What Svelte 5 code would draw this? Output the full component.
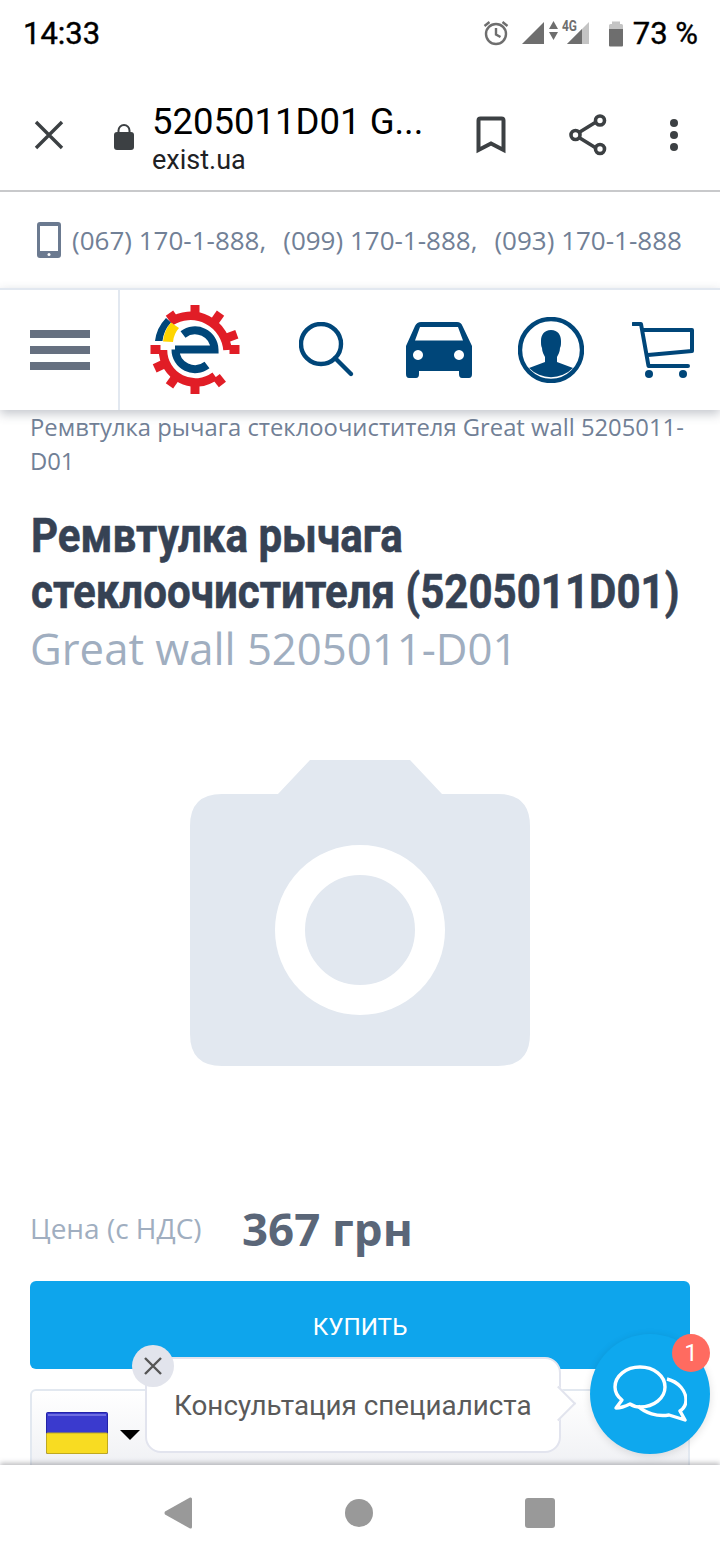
<script>
  const phones = ['(067) 170-1-888,', '(099) 170-1-888,', '(093) 170-1-888'];
</script>

<div class="screen">
  <header class="status">
    <span class="time">14:33</span>
    <div class="status-right">
      <svg class="alarm" width="28" height="28" viewBox="0 0 28 28" fill="none" stroke="#6e6e6e" stroke-width="2.4">
        <circle cx="14" cy="15" r="10" />
        <path d="M14 9v6.500l4.500 2.500M2.500 7l5-4M25.500 7l-5-4" />
      </svg>
      <svg class="signal" width="70" height="34" viewBox="0 -4 70 34">
        <path d="M0 24 22 2v22z" fill="#6e6e6e" />
        <path d="M27 9l4.500-8 4.500 8zM27 12h9l-4.500 8z" fill="#6e6e6e" />
        <path d="M45 24 67 2v22z" fill="#c4c4c4" />
        <path d="M45 24 60 9v15z" fill="#6e6e6e" />
        <text x="40" y="11" class="fourg" textLength="15" lengthAdjust="spacingAndGlyphs">4G</text>
      </svg>
      <svg class="battery" width="16" height="27" viewBox="0 0 16 27">
        <path d="M1 5.500q0-1.500 1.500-1.500H4V1.500h8V4h1.500Q15 4 15 5.500V9H1z" fill="#c4c4c4" />
        <path d="M1 9h14v16.500q0 1-1 1H2q-1 0-1-1z" fill="#6e6e6e" />
      </svg>
      <span class="pct">73 %</span>
    </div>
  </header>

  <div class="toolbar">
    <svg class="close" width="30" height="30" viewBox="0 0 30 30" stroke="#3c4043" stroke-width="3.400" fill="none">
      <path d="M2 2l26 26M28 2 2 28" />
    </svg>
    <svg class="lock" width="22" height="28" viewBox="0 0 22 28">
      <path d="M5.500 10V7.500a5.500 5.500 0 0 1 11 0V10" fill="none" stroke="#3c4043" stroke-width="2" />
      <rect x="1" y="9" width="20" height="18" rx="3" fill="#3c4043" />
    </svg>
    <div class="url">
      <div class="page-title">5205011D01 G...</div>
      <div class="domain">exist.ua</div>
    </div>
    <svg class="bookmark" width="30" height="38" viewBox="0 0 30 38" fill="none" stroke="#3c4043" stroke-width="4">
      <path d="M2.500 34V4.500q0-2 2-2h21q2 0 2 2V34L15 27.500z" />
    </svg>
    <svg class="share" width="38" height="42" viewBox="0 0 38 42" fill="none" stroke="#3c4043" stroke-width="3.600">
      <path d="M10 18.500 27 8M10 23.500 27 34" />
      <circle cx="6.500" cy="21" r="4.500" />
      <circle cx="31" cy="6.500" r="4.500" />
      <circle cx="31" cy="35" r="4.500" />
    </svg>
    <svg class="more" width="8" height="32" viewBox="0 0 8 32" fill="#3c4043">
      <circle cx="4" cy="4" r="4" />
      <circle cx="4" cy="16" r="4" />
      <circle cx="4" cy="28" r="4" />
    </svg>
  </div>

  <main class="page">
    <div class="phones">
      <svg width="24" height="36" viewBox="0 0 24 36">
        <path fill-rule="evenodd" fill="#6b7a90" d="M3 0h18q3 0 3 3v30q0 3-3 3H3q-3 0-3-3V3q0-3 3-3zM3 4v25h18V4z" />
        <circle cx="12" cy="32.500" r="1.500" fill="#fff" />
      </svg>
      {#each phones as p}
        <span>{p}</span>
      {/each}
    </div>

    <nav class="mainnav">
      <div class="burger">
        <i></i><i></i><i></i>
      </div>
      <div class="navicons">
        <svg class="logo" width="90" height="90" viewBox="150 304 90 90" fill="none">
          <g stroke="#e11d26" stroke-width="8.500">
            <path d="M171 320.500A37 37 0 0 1 227.500 349" />
            <path d="M163 349a32.500 32.500 0 0 0 52 26" />
          </g>
          <g fill="#e11d26">
            <rect x="190.500" y="304" width="9" height="10" />
            <rect x="190.500" y="304" width="9" height="10" transform="rotate(35 195 348.500)" />
            <rect x="190.500" y="304" width="9" height="10" transform="rotate(70 195 348.500)" />
            <rect x="190.500" y="304" width="9" height="10" transform="rotate(90 195 348.500)" />
            <rect x="190.500" y="304" width="9" height="10" transform="rotate(142 195 348.500)" />
            <rect x="190.500" y="304" width="9" height="10" transform="rotate(180 195 348.500)" />
            <rect x="190.500" y="304" width="9" height="10" transform="rotate(215 195 348.500)" />
            <rect x="190.500" y="304" width="9" height="10" transform="rotate(245 195 348.500)" />
            <rect x="190.500" y="304" width="9" height="10" transform="rotate(270 195 348.500)" />
            <rect x="190.500" y="304" width="9" height="10" transform="rotate(-35 195 348.500)" />
          </g>
          <path d="M155 340a40 40 0 0 1 11-23l5 4.500a32 32 0 0 0-8.500 18.500z" fill="#004679" />
          <path d="M163 340.500a32 32 0 0 1 8-19l8 5.500a24 24 0 0 0-6 14z" fill="#ffd500" />
          <path d="M175 348.500h39.500A19.500 19.500 0 0 0 183 333.500M175.500 348.500A19.500 19.500 0 0 0 207 364" stroke="#004679" stroke-width="8" />
        </svg>
        <svg class="search" width="56" height="56" viewBox="0 0 56 56" fill="none" stroke="#004679" stroke-width="4.400">
          <circle cx="22" cy="22" r="20" />
          <path d="M36 36l16 16" stroke-linecap="round" />
        </svg>
        <svg class="car" width="66" height="56" viewBox="0 0 66 56" fill="#004679">
          <path fill-rule="evenodd" d="M15 0h36q4 0 5.500 4L66 24v28q0 4-3 4h-7q-3 0-3-4v-3H13v3q0 4-3 4H3q-3 0-3-4V24L9 4q2-4 6-4zM14 5l-5 13.500h48L52 5zM12 28a5 5 0 1 0 0.010 0zM53 28a5 5 0 1 0 0.010 0z" />
        </svg>
        <svg class="person" width="66" height="66" viewBox="0 0 66 66">
          <circle cx="33" cy="33" r="31" fill="none" stroke="#004679" stroke-width="4.400" />
          <path fill="#004679" d="M33 13c-7 0-10 5-10 11 0 3 0 5 1 7 0 4 2 7 3 9v5l-16 6a31 31 0 0 0 44 0l-16-6v-5c1-2 3-5 3-9 1-2 1-4 1-7 0-6-3-11-10-11z" />
        </svg>
        <svg class="cart" width="62" height="56" viewBox="0 0 62 56" fill="none" stroke="#004679" stroke-width="4">
          <path d="M1 2h8l7.500 42H56" stroke-linecap="round" stroke-linejoin="round" />
          <path d="M11 8h49v21l-44 4" stroke-linejoin="round" />
          <circle cx="17" cy="52" r="4" fill="#004679" stroke="none" />
          <circle cx="51" cy="52" r="4" fill="#004679" stroke="none" />
        </svg>
      </div>
    </nav>

    <div class="content">
      <p class="crumb">Ремвтулка рычага стеклоочистителя Great wall 5205011-D01</p>
      <h1>
        <span class="h-main">Ремвтулка рычага</span>
        <span class="h-main">стеклоочистителя (5205011D01)</span>
        <span class="h-sub">Great wall 5205011-D01</span>
      </h1>

      <div class="photo">
        <svg width="340" height="306" viewBox="0 0 340 306">
          <path fill="#e2e8f0" d="M120 0h100l32 34h56q32 0 32 32v208q0 32-32 32H32q-32 0-32-32V66q0-32 32-32h56z" />
          <circle cx="170" cy="170" r="70" fill="none" stroke="#fff" stroke-width="30" />
        </svg>
      </div>

      <div class="price">
        <span class="price-label">Цена (с НДС)</span>
        <span class="price-value">367 грн</span>
      </div>

      <button class="buy">КУПИТЬ</button>

      <div class="phone-field">
        <svg width="62" height="42" viewBox="0 0 62 42">
          <rect x="0.500" y="0.500" width="61" height="41" rx="1" fill="#3a3ace" stroke="#2222a8" />
          <rect x="0.500" y="21" width="61" height="20.500" rx="1" fill="#f8dc22" stroke="#bfa920" />
          <rect x="2" y="2" width="58" height="2" fill="#6c6ce0" />
        </svg>
        <span class="caret"></span>
      </div>
    </div>
  </main>

  <footer class="sysnav">
    <svg width="28" height="32" viewBox="0 0 28 32"><path fill="#999" d="M28 2v28q0 2-2 1.500L1 17.500q-1-1.500 0-3L26 .5q2-.5 2 1.500z" /></svg>
    <svg width="28" height="28" viewBox="0 0 28 28"><circle cx="14" cy="14" r="14" fill="#999" /></svg>
    <svg width="30" height="30" viewBox="0 0 30 30"><rect width="30" height="30" rx="3" fill="#999" /></svg>
  </footer>

  <div class="tip">
    <span>Консультация специалиста</span>
    <i class="tip-arrow"></i>
  </div>
  <div class="tip-close">
    <svg width="18" height="18" viewBox="0 0 18 18" stroke="#555" stroke-width="2.400" fill="none"><path d="M1 1l16 16M17 1 1 17" /></svg>
  </div>
  <div class="chat">
    <svg width="74" height="58" viewBox="0 0 74 58" fill="none" stroke="#fff" stroke-width="3.400" stroke-linejoin="round">
      <path d="M54 14C66 17 73 26 73 35C73 40 70 44 67 46L72 55L56 50C44 52 32 48 25 41" />
      <path d="M27 2C13 2 2 11 2 22C2 27 5 32 9 35L3 43C8 43 13 41 17 39C20 41 23 42 27 42C41 42 52 33 52 22C52 11 41 2 27 2z" />
    </svg>
  </div>
  <div class="badge">1</div>
</div>

<style>
  :global(body) {
    margin: 0;
    background: #fff;
  }

  .screen {
    position: relative;
    width: 720px;
    height: 1560px;
    display: flex;
    flex-direction: column;
    overflow: hidden;
    background: #fff;
    font-family: 'Open Sans', sans-serif;
  }

  .status {
    height: 70px;
    flex: none;
    display: flex;
    align-items: center;
    justify-content: space-between;
    padding: 0 22px 4px 23px;
    box-sizing: border-box;
    font-family: Roboto, sans-serif;
    color: #000;
  }

  .time {
    font-size: 31px;
    font-weight: 400;
    -webkit-text-stroke: 0.4px #000;
  }

  .status-right {
    display: flex;
    align-items: center;
  }

  .alarm {
    margin-right: 12px;
  }

  .signal {
    margin-right: 16px;
  }

  .fourg {
    font-size: 15px;
    font-weight: 700;
    fill: #6e6e6e;
  }

  .battery {
    margin-right: 9px;
  }

  .pct {
    font-size: 31px;
    font-weight: 400;
    -webkit-text-stroke: 0.4px #000;
  }

  .toolbar {
    height: 122px;
    flex: none;
    box-sizing: border-box;
    display: flex;
    align-items: center;
    padding: 10px 42px 0 34px;
    border-bottom: 2px solid #c8c9cb;
    font-family: Roboto, sans-serif;
  }

  .lock {
    margin: 3px 17px 0 49px;
  }

  .url {
    flex: 1;
    margin-top: 7px;
  }

  .page-title {
    font-size: 36.500px;
    line-height: 42px;
    color: #000;
  }

  .domain {
    font-size: 27px;
    line-height: 34px;
    color: #202124;
  }

  .share {
    margin-left: 63px;
    margin-right: 63px;
  }

  .page {
    flex: 1;
    min-height: 0;
    overflow: hidden;
  }

  .phones {
    height: 96px;
    box-sizing: border-box;
    display: flex;
    align-items: center;
    padding-left: 37px;
    font-size: 26px;
    color: #718096;
    white-space: nowrap;
  }

  .phones svg {
    margin-right: 11px;
  }

  .phones span {
    margin-right: 17px;
  }

  .mainnav {
    height: 122px;
    box-sizing: border-box;
    display: flex;
    border-top: 2px solid #e2e8f0;
    box-shadow: 0 4px 10px rgba(60, 70, 90, 0.3);
    position: relative;
    background: #fff;
  }

  .burger {
    width: 120px;
    flex: none;
    box-sizing: border-box;
    border-right: 2px solid #e2e8f0;
    display: flex;
    flex-direction: column;
    justify-content: center;
    gap: 8px;
    padding-left: 30px;
  }

  .burger i {
    display: block;
    width: 60px;
    height: 8px;
    background: #667080;
  }

  .navicons {
    flex: 1;
    display: flex;
    align-items: center;
    padding-left: 30px;
  }

  .search {
    margin-left: 59px;
  }

  .car {
    margin-left: 51px;
  }

  .person {
    margin-left: 46px;
  }

  .cart {
    margin-left: 48px;
  }

  .content {
    padding: 0 30px;
  }

  .crumb {
    margin: 0;
    font-size: 23.800px;
    line-height: 34px;
    color: #718096;
  }

  h1 {
    margin: 30px 0 0;
    display: flex;
    flex-direction: column;
    font-weight: 700;
    line-height: 56px;
    white-space: nowrap;
  }

  .h-main {
    font-family: Roboto, sans-serif;
    font-size: 48px;
    color: #364254;
    -webkit-text-stroke: 0.6px #364254;
    transform: translateX(1px) scaleX(0.876);
    transform-origin: left;
  }

  .h-sub {
    font-size: 43.700px;
    font-weight: 400;
    color: #a0aec0;
  }

  .photo {
    display: flex;
    justify-content: center;
    margin-top: 84px;
  }

  .price {
    display: flex;
    align-items: center;
    margin-top: 133px;
    height: 58px;
  }

  .price-label {
    width: 212px;
    font-size: 28px;
    color: #a0aec0;
  }

  .price-value {
    font-size: 45.600px;
    font-weight: 700;
    color: #5a6678;
  }

  .buy {
    display: block;
    width: 100%;
    height: 88px;
    margin-top: 24px;
    padding-top: 5px;
    border: 0;
    border-radius: 6px;
    background: #0ea5ec;
    color: #fff;
    font-family: Roboto, sans-serif;
    font-size: 24.200px;
  }

  .phone-field {
    height: 120px;
    margin-top: 20px;
    box-sizing: border-box;
    border: 2px solid #e2e8f0;
    border-radius: 6px;
    display: flex;
    align-items: flex-start;
    padding: 21px 0 0 14px;
    background: linear-gradient(to bottom, #fff, #f1f2f5 60%);
  }

  .caret {
    margin: 18px 0 0 12px;
    border-style: solid;
    border-width: 10px 10px 0;
    border-color: #000 transparent transparent;
  }

  .sysnav {
    height: 95px;
    flex: none;
    position: relative;
    background: #fff;
    box-shadow: 0 -2px 5px rgba(60, 60, 70, 0.35);
    display: flex;
    align-items: center;
    justify-content: space-between;
    padding: 0 165px 0 164px;
    box-sizing: border-box;
  }

  .tip {
    position: absolute;
    left: 145px;
    top: 1357px;
    width: 416px;
    height: 96px;
    box-sizing: border-box;
    background: #fff;
    border: 2px solid #e2e4ee;
    border-radius: 16px;
    padding: 30px 0 0 27px;
    font-family: Roboto, sans-serif;
    font-size: 27.800px;
    line-height: 34px;
    color: #5a5a5a;
    white-space: nowrap;
  }

  .tip-arrow {
    position: absolute;
    right: -12px;
    top: 32px;
    width: 23px;
    height: 23px;
    background: #fff;
    border-top: 2px solid #e2e4ee;
    border-right: 2px solid #e2e4ee;
    transform: rotate(45deg);
  }

  .tip-close {
    position: absolute;
    left: 132px;
    top: 1345px;
    width: 42px;
    height: 42px;
    border-radius: 50%;
    background: #e2e4ec;
    display: flex;
    align-items: center;
    justify-content: center;
  }

  .chat {
    position: absolute;
    left: 590px;
    top: 1334px;
    width: 120px;
    height: 120px;
    border-radius: 50%;
    background: #0ea8ee;
    box-shadow: 0 2px 8px rgba(0, 0, 0, 0.12);
    display: flex;
    align-items: center;
    justify-content: center;
  }

  .badge {
    position: absolute;
    left: 672px;
    top: 1334px;
    width: 38px;
    height: 38px;
    border-radius: 50%;
    background: #ff6b60;
    color: #fff;
    font-family: Roboto, sans-serif;
    font-size: 24px;
    line-height: 38px;
    text-align: center;
  }
</style>
